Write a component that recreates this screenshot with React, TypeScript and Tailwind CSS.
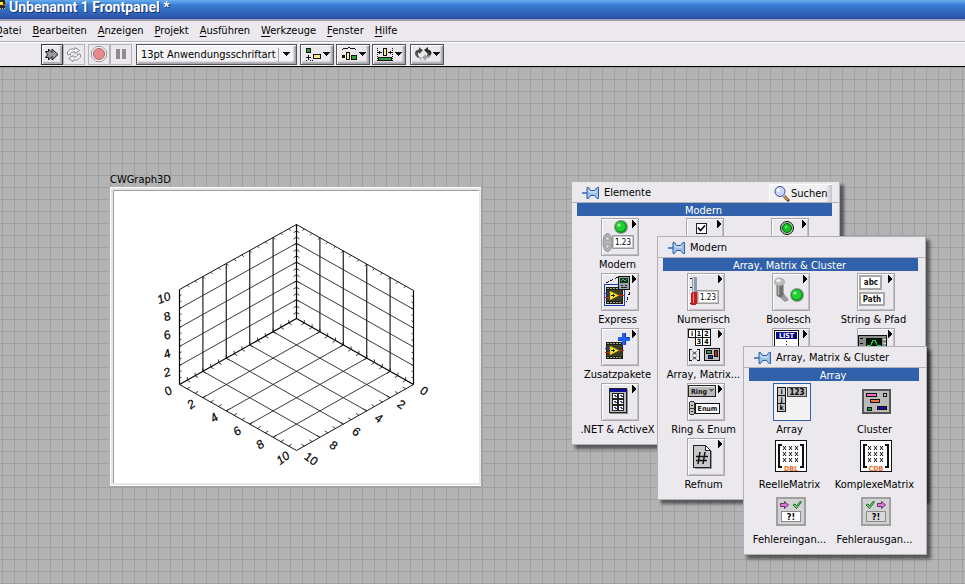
import type { ReactNode } from "react";

const INK = "#111";

function Arrow() {
  return <path d="M31 2h1v1h1v1h1v1h1v2h-1v1h-1v1h-1v1h-1z" fill="#000" />;
}

function Led({ cx, cy, r = 6 }: { cx: number; cy: number; r?: number }) {
  return (
    <g shapeRendering="auto">
      <circle cx={cx} cy={cy} r={r + 1} fill="#9a9a9a" />
      <circle cx={cx} cy={cy} r={r} fill="#0b9a1c" />
      <circle cx={cx - 0.5} cy={cy - 0.5} r={r - 1.2} fill="#22d02f" />
      <circle cx={cx - 2} cy={cy - 2} r={1.6} fill="#a6f7a4" />
    </g>
  );
}

function Num({ x, y }: { x: number; y: number }) {
  return (
    <g>
      <rect x={x} y={y} width="22" height="14" fill="#9c9c9c" />
      <rect x={x + 1} y={y + 1} width="20" height="12" fill="#c9c9c9" />
      <rect x={x + 2} y={y + 2} width="18" height="10" fill="#fff" />
      <text x={x + 11} y={y + 10} textAnchor="middle" fontSize="8" fill="#000">1.23</text>
    </g>
  );
}

function Chip({ x, y }: { x: number; y: number }) {
  return (
    <g>
      <rect x={x} y={y} width="17" height="17" fill="#1d1d14" />
      <path d={`M${x + 1} ${y + 1.5}h15M${x + 1} ${y + 15.5}h15`} stroke="#a9a98c" strokeDasharray="2 1" />
      <rect x={x + 1} y={y + 3} width="15" height="11" fill="#3c3d22" />
      <path d={`M${x - 1} ${y + 6.5}h6`} stroke="#1c3fd0" strokeWidth="1" />
      <path d={`M${x - 1} ${y + 10.5}h6M${x + 12} ${y + 8.5}h6`} stroke="#d02020" strokeWidth="1" />
      <g shapeRendering="auto">
        <path d={`M${x + 4} ${y + 4}l9 4.500l-9 4.500z`} fill="#f5ee2c" stroke="#a08a00" strokeWidth=".5" />
      </g>
      <path d={`M${x + 5} ${y + 8.5}h4M${x + 7.5} ${y + 7}v3`} stroke="#222" />
    </g>
  );
}

function ModernIcon() {
  return (
    <>
      <g shapeRendering="auto">
        <ellipse cx="6.500" cy="24.500" rx="4.500" ry="9" fill="#b4b4b4" stroke="#8c8c8c" />
        <path d="M4 22l2.500-3.500l2.500 3.500zM4 27l2.500 3.500l2.500-3.500z" fill="#eee" stroke="#808080" strokeWidth=".6" />
      </g>
      <Led cx={20} cy={9} />
      <Num x={11} y={17} />
      <Arrow />
    </>
  );
}

function CheckIcon() {
  return (
    <>
      <rect x="10.500" y="5.500" width="10" height="10" fill="#fff" stroke="#222" />
      <path d="M12 9.500l2.500 3l4.500-5" fill="none" stroke="#000" strokeWidth="1.500" shapeRendering="auto" />
      <Arrow />
    </>
  );
}

function RoundLedIcon() {
  return (
    <>
      <g shapeRendering="auto">
        <circle cx="16" cy="10" r="6.500" fill="#b9c9b9" stroke="#111" />
        <circle cx="16" cy="10" r="4.500" fill="#12c320" stroke="#0b5a12" />
        <circle cx="15" cy="9" r="1.500" fill="#5fe767" />
      </g>
      <Arrow />
    </>
  );
}

function ExpressIcon() {
  return (
    <>
      <path d="M5 10l12-6M29 19l-4 10" fill="none" stroke="#111" strokeDasharray="3 2" />
      <rect x="3.500" y="11.500" width="20" height="21" fill="#e9ebf5" stroke="#1c3fae" />
      <Chip x={5} y={14} />
      <rect x="17.500" y="3.500" width="11" height="13" fill="#9da3ab" stroke="#111" />
      <rect x="19" y="5" width="8" height="5" fill="#10351a" />
      <path d="M20 8l2-2l2 2l2-2" fill="none" stroke="#4be36a" strokeWidth=".8" />
      <path d="M20 12.500h2M24 12.500h2M20 14.500h6" stroke="#222" />
      <Arrow />
    </>
  );
}

function AddonIcon() {
  return (
    <>
      <Chip x={5} y={14} />
      <path d="M21 5h4v4h4v4h-4v4h-4v-4h-4V9h4z" fill="#1d62f0" />
      <path d="M24.500 5v4M25 9.500h3M24.500 13v4M17 12.500h4" fill="none" stroke="#0c2f9c" />
      <Arrow />
    </>
  );
}

function NetIcon() {
  return (
    <>
      <rect x="9" y="6" width="18" height="25" fill="#8d8d8d" />
      <rect x="8.500" y="5.500" width="17" height="24" fill="#bdbdbd" stroke="#222" />
      <rect x="9" y="6" width="16" height="3" fill="#0d0d99" />
      {[11, 17].flatMap((x) =>
        [10, 16, 22].map((y) => (
          <g key={`${x}-${y}`}>
            <rect x={x + 0.5} y={y + 0.5} width="5" height="5" fill="#fff" stroke="#222" />
            <path d={`M${x + 2} ${y + 2.5}h2M${x + 3} ${y + 3.5}h2`} stroke="#2b3f8c" />
          </g>
        )),
      )}
      <Arrow />
    </>
  );
}

function NumericIcon() {
  return (
    <>
      <path d="M3 5.500h2M3 14.500h2M3 30.500h2" stroke="#111" />
      <rect x="5" y="4" width="5" height="17" rx="2" fill="#8f9bab" />
      <path d="M6.500 5v15" stroke="#d8e2ef" />
      <rect x="4" y="19" width="6" height="13" rx="2" fill="#c21f1f" />
      <path d="M6.500 20v10" stroke="#ff7a70" />
      <Num x={10} y={17} />
      <Arrow />
    </>
  );
}

function BoolIcon() {
  return (
    <>
      <g shapeRendering="auto">
        <path d="M9 17l8 10l-4 2l-6-5z" fill="#9b9b9b" />
        <rect x="4.500" y="9" width="7" height="15" rx="3" fill="#6f6f6f" />
        <path d="M6.500 11v11" stroke="#b5b5b5" strokeWidth="1.500" />
        <ellipse cx="7.500" cy="9" rx="5" ry="4" fill="#bdbdbd" stroke="#8a8a8a" strokeWidth=".6" />
        <ellipse cx="6.500" cy="7.500" rx="2.500" ry="1.500" fill="#efefef" />
      </g>
      <Led cx={25} cy={22} />
      <Arrow />
    </>
  );
}

function StringIcon() {
  return (
    <>
      <rect x="3" y="3" width="21" height="13" fill="#fff" stroke="#a8a8a8" strokeWidth="2" />
      <text x="14" y="12" textAnchor="middle" fontSize="8" fontWeight="600" fill={INK}>abc</text>
      <rect x="3" y="20" width="24" height="12" fill="#fff" stroke="#a8a8a8" strokeWidth="2" />
      <text x="15" y="29" textAnchor="middle" fontSize="8" fontWeight="600" fill={INK}>Path</text>
      <Arrow />
    </>
  );
}

function ArrayMatrixIcon() {
  return (
    <>
      <path d="M1.500 1.500h22v8h-22zM8.500 1.500v8M15.500 1.500v8" fill="#fff" stroke="#111" />
      <path d="M8.500 9.500h15v8h-15zM15.500 9.500v8" fill="#fff" stroke="#111" />
      <g fontSize="7" fontWeight="700" textAnchor="middle" fill="#000">
        <text x="5" y="8">i</text>
        <text x="12" y="8">1</text>
        <text x="19.500" y="8">2</text>
        <text x="12" y="16">3</text>
        <text x="19.500" y="16">4</text>
      </g>
      <path d="M5 21.500H2.500v11H5M10 21.500h2.500v11H10" fill="none" stroke="#111" />
      <path d="M5.500 23.500l4 3m0-3l-4 3M5.500 28.500l4 3m0-3l-4 3" stroke="#111" strokeWidth=".8" shapeRendering="auto" />
      <rect x="17.500" y="20.500" width="15" height="12" fill="#bdbdbd" stroke="#111" />
      <g stroke="#111" strokeWidth="1">
        <rect x="19.500" y="22.500" width="5" height="3" fill="#22a33a" />
        <rect x="27.500" y="22.500" width="3" height="6" fill="#c22" />
        <rect x="21.500" y="27.500" width="4" height="3" fill="#1d3fc0" />
      </g>
      <Arrow />
    </>
  );
}

function ListIcon() {
  return (
    <>
      <rect x="2.500" y="2.500" width="24" height="33" fill="#fff" stroke="#111" />
      <rect x="4" y="4" width="21" height="7" fill="#0b0b86" />
      <text x="14.500" y="10" textAnchor="middle" fontSize="7" fontWeight="700" fill="#fff">LIST</text>
      <path d="M14.500 13v10" stroke="#111" strokeDasharray="1 2" />
      <Arrow />
    </>
  );
}

function GraphIcon() {
  return (
    <>
      <rect x="1.500" y="7.500" width="28" height="24" fill="#8b8f8b" stroke="#111" />
      <path d="M3 10.500h3M3 15.500h3" stroke="#111" />
      <rect x="9" y="10" width="16" height="18" fill="#04140a" />
      <path d="M10 18l4-1l2-5h2l2 5l4 1" fill="none" stroke="#2ad24a" />
      <path d="M26 11.500h3M26 15.500h3" stroke="#ddd" />
      <Arrow />
    </>
  );
}

function RingIcon() {
  return (
    <>
      <rect x="1.500" y="2.500" width="27" height="11" fill="#b9b9b9" stroke="#222" />
      <path d="M2 3.500h26" stroke="#eee" />
      <text x="4" y="11" fontSize="7" fontWeight="700" fill={INK}>Ring</text>
      <path d="M22 6h5l-2.500 3z" fill="#666" />
      <rect x="2.500" y="18.500" width="5" height="13" rx="2" fill="#c4c4c4" stroke="#333" />
      <path d="M4 22.500h2M4 28.500h2M3 25.500h4" stroke="#333" />
      <rect x="8.500" y="20.500" width="24" height="10" fill="#fff" stroke="#111" />
      <text x="20.500" y="28" textAnchor="middle" fontSize="7" fontWeight="700" fill={INK}>Enum</text>
      <Arrow />
    </>
  );
}

function RefnumIcon() {
  return (
    <>
      <path d="M8 30.500h16.500V13" fill="none" stroke="#999" />
      <path d="M6.500 7.500h12l5 5v17h-17z" fill="#c9c9c9" stroke="#222" />
      <path d="M18.500 7.500v5h5z" fill="#fff" stroke="#222" />
      <path d="M13 14l-2 12M18 14l-2 12M9 18.500h12M9 22.500h11" stroke="#111" strokeWidth="1.500" shapeRendering="auto" />
      <Arrow />
    </>
  );
}

function ArrayIcon() {
  return (
    <>
      <path d="M4.500 4.500h8v24h-8zM4.500 12.500h8M4.500 20.500h8" fill="#c8c8c8" stroke="#111" />
      <rect x="14.500" y="4.500" width="19" height="9" fill="#b8b8b8" stroke="#444" />
      <g fontSize="7" fontWeight="700" textAnchor="middle" fill="#000">
        <text x="8.500" y="11">i</text>
        <text x="8.500" y="19">j</text>
        <text x="8.500" y="27">k</text>
        <text x="24" y="12" fontSize="8">123</text>
      </g>
    </>
  );
}

function ClusterIcon() {
  return (
    <>
      <rect x="5" y="7" width="27" height="23" fill="#bbb" stroke="#555" strokeWidth="2" />
      <rect x="8.500" y="10.500" width="10" height="3" fill="#f070c0" stroke="#111" />
      <rect x="25.500" y="10.500" width="3" height="3" fill="#ccc" stroke="#111" />
      <rect x="12.500" y="16.500" width="9" height="3" fill="#f0703c" stroke="#111" />
      <rect x="9.500" y="24.500" width="4" height="3" fill="#17a030" stroke="#111" />
      <rect x="19.500" y="23.500" width="9" height="3" fill="#0d0da0" stroke="#111" />
    </>
  );
}

function MatrixIcon({ kind }: { kind: string }) {
  return (
    <>
      <rect x="2.500" y="2.500" width="31" height="31" fill="#fff" stroke="#111" />
      <path d="M9 7H6v22h3M27 7h3v22h-3" fill="none" stroke="#111" strokeWidth="1.500" />
      <g stroke="#111" strokeWidth="1" shapeRendering="auto">
        {[10, 16, 22].flatMap((x) =>
          [8, 14, 20].map((y) => <path key={`${x}-${y}`} d={`M${x} ${y}l3 4m0-4l-3 4`} />),
        )}
      </g>
      <text x="18" y="33" textAnchor="middle" fontSize="7" fontWeight="700" fill="#e8702a">{kind}</text>
    </>
  );
}

function ErrorIcon({ out = false }: { out?: boolean }) {
  const arrowX = out ? 20 : 8;
  const checkX = out ? 8 : 20;
  return (
    <>
      <rect x="4" y="5" width="28" height="27" fill="#d2d2d2" stroke="#a0a0a0" strokeWidth="2" />
      <path
        d={`M${arrowX - 0.5} 10.500h4v-2l4 3.500l-4 3.500v-2h-4z`}
        fill="#d97ad6"
        stroke="#4c1450"
        strokeWidth=".8"
        shapeRendering="auto"
      />
      <path
        d={`M${checkX} 12l2 -1l1.500 2l4-5l1 1l-5 6.500z`}
        fill="#6bdc6f"
        stroke="#0d4f18"
        strokeWidth=".8"
        shapeRendering="auto"
      />
      <rect x="8.500" y="18.500" width="19" height="10" fill={out ? "#d8d8d8" : "#fff"} stroke="#8b8b8b" />
      <text x="18" y="27" textAnchor="middle" fontSize="9" fontWeight="700" fill="#000">?!</text>
    </>
  );
}

function Pin() {
  return (
    <svg width="17" height="14" viewBox="0 0 17 14" aria-hidden="true">
      <path d="M0 7h5" stroke="#2d66ad" strokeWidth="1.500" />
      <path
        d="M5 1.500h1.500l2 3h4l2.500-3h1.500v11H15l-2.500-3h-4l-2 3H5z"
        fill="#9cc0ea"
        stroke="#2a5ba3"
      />
      <path d="M6 4l2 2h6" stroke="#e4f1ff" fill="none" />
    </svg>
  );
}

type Item = { label: string; icon: ReactNode; selected?: boolean; plain?: boolean };

function PaletteItem({ label, icon, selected, plain }: Item) {
  const frame = selected
    ? "border-[#3261ab] bg-[#f3f2f5]"
    : plain
      ? "border-transparent"
      : "border-[#a8a6ab] bg-[#ebe9ed] shadow-[inset_1px_1px_0_#fff,inset_-1px_-1px_0_#c3c1c6]";
  return (
    <button type="button" className="flex h-[55px] min-w-0 flex-col items-center">
      <span className={`block size-[38px] shrink-0 border ${frame}`}>
        <svg width="36" height="36" viewBox="1 1 36 36" shapeRendering="crispEdges" aria-hidden="true">
          {icon}
        </svg>
      </span>
      <span className="pr-1 text-[11px] leading-[17px] whitespace-nowrap">{label}</span>
    </button>
  );
}

function Palette({
  title,
  category,
  items,
  columns,
  place,
  search,
}: {
  title: string;
  category: string;
  items: Item[];
  columns: string;
  place: string;
  search?: boolean;
}) {
  return (
    <section
      className={`absolute border border-[#b3b1b6] bg-[#ebe9ed] shadow-[4px_4px_3px_rgba(0,0,0,0.5)] ${place}`}
    >
      <header className="flex h-[21px] items-center gap-[5px] border-b border-[#b3b1b6] pt-[2px] pr-[7px] pl-[10px]">
        <Pin />
        <h2 className="flex-1 text-[11px] leading-4">{title}</h2>
        {search && (
          <button
            type="button"
            className="flex h-[18px] w-[63px] items-center gap-px border-t border-l border-white bg-linear-to-r from-[#f1f0f3] from-90% to-[#c4c2c8] pl-1 text-[11px] leading-4"
          >
            <svg width="16" height="17" viewBox="0 0 16 17" aria-hidden="true">
              <path d="M10 11l5 5" stroke="#5a3a1c" strokeWidth="3" />
              <path d="M10 11l4 4" stroke="#e3a85c" strokeWidth="1.500" />
              <circle cx="6" cy="6.500" r="5" fill="#c9d6fb" stroke="#3b4a9a" />
              <circle cx="4.500" cy="5" r="1.800" fill="#fff" />
            </svg>
            <span>Suchen</span>
          </button>
        )}
      </header>
      <div className="pr-[7px] pb-[6px] pl-[5px]">
        <h3 className="h-[13px] bg-[#3261ab] pr-[2px] text-center text-[11px] leading-[15px] text-white">{category}</h3>
        <div className={`mt-[2px] grid ${columns}`}>
          {items.map((item, i) => (
            <PaletteItem key={i} {...item} />
          ))}
        </div>
      </div>
    </section>
  );
}

type Pt = [number, number];
const lerp = (a: Pt, b: Pt, t: number): Pt => [a[0] + (b[0] - a[0]) * t, a[1] + (b[1] - a[1]) * t];

const TOP: Pt = [186.5, 37.5];
const MID: Pt = [186.5, 131.5];
const BOTTOM: Pt = [186.5, 263.5];
const LT: Pt = [69.5, 102.5];
const LB: Pt = [69.5, 197.5];
const RT: Pt = [303.5, 103.5];
const RB: Pt = [303.5, 197.5];

const seg = (a: Pt, b: Pt) => `M${a[0]} ${a[1]}L${b[0]} ${b[1]}`;
const STEPS = [0.2, 0.4, 0.6, 0.8];
const TICKS = Array.from({ length: 14 }, (_, i) => (i + 1) / 15);

const gridLines = (a: Pt, b: Pt, c: Pt, d: Pt) => STEPS.map((t) => seg(lerp(a, b, t), lerp(c, d, t))).join("");
const tickLines = (a: Pt, b: Pt, dx: number, dy: number) =>
  TICKS.map((t) => {
    const p = lerp(a, b, t);
    return `M${p[0]} ${p[1]}l${dx} ${dy}`;
  }).join("");

function Graph3D() {
  const vertical = gridLines(TOP, LT, MID, LB) + gridLines(TOP, RT, MID, RB);
  const thin =
    gridLines(LT, LB, TOP, MID) +
    gridLines(TOP, MID, RT, RB) +
    gridLines(LB, BOTTOM, MID, RB) +
    gridLines(MID, LB, RB, BOTTOM);
  const frame = seg(LT, TOP) + seg(TOP, RT) + seg(LB, BOTTOM) + seg(BOTTOM, RB);
  const strong = seg(TOP, MID) + seg(LT, LB) + seg(RT, RB) + seg(LB, MID) + seg(MID, RB);
  const ticks =
    tickLines(TOP, MID, -3, 2) +
    tickLines(TOP, MID, 3, 2) +
    tickLines(LT, TOP, 2, 2) +
    tickLines(TOP, RT, -2, 2) +
    tickLines(LB, BOTTOM, 3, -2) +
    tickLines(BOTTOM, RB, -3, -2) +
    tickLines(LB, MID, 3, 2) +
    tickLines(LB, MID, 0, -3) +
    tickLines(MID, RB, -3, 2) +
    tickLines(MID, RB, 0, -3) +
    tickLines(LT, LB, 2, -1) +
    tickLines(RT, RB, -2, -1);
  const left = ["0", "2", "4", "6", "8", "10"].map((v, i) => ({ v, x: 58 + i * 23, y: 204 + i * 13.4 }));
  const right = ["0", "2", "4", "6", "8", "10"].map((v, i) => ({ v, x: 314 - i * 22.6, y: 204 + i * 13.6 }));
  const z = ["10", "8", "6", "4", "2"].map((v, i) => ({ v, x: v === "10" ? 54 : 57, y: 111 + i * 18.6 }));
  return (
    <svg width="371" height="299" viewBox="0 0 371 299" role="img" aria-label="CWGraph3D" className="block">
      <rect width="371" height="299" fill="#fff" />
      <path d="M2 297V2h368v295z" fill="#fff" stroke="#e6e5e9" strokeWidth="2" />
      <path d="M3.500 296V3.500H369" fill="none" stroke="#9d9ca3" />
      <path d={vertical} fill="none" stroke="#333" strokeWidth="1.300" />
      <path d={thin} fill="none" stroke="#222" strokeWidth=".9" />
      <path d={frame} fill="none" stroke="#111" strokeWidth="1" />
      <path d={strong} fill="none" stroke="#000" strokeWidth="1.200" />
      <path d={ticks} fill="none" stroke="#111" strokeWidth=".8" />
      <g fontSize="12" textAnchor="middle" className="font-['Liberation_Sans',Arial,sans-serif]" fill="#000" stroke="#000" strokeWidth=".2">
        {left.map((l) => (
          <text key={l.v} fontStyle="italic" transform={`translate(${l.x} ${l.y}) rotate(-36)`} y="4">{l.v}</text>
        ))}
        {right.map((l) => (
          <text key={l.v} transform={`translate(${l.x} ${l.y}) rotate(36)`} y="4">{l.v}</text>
        ))}
        {z.map((l) => (
          <text key={l.v} fontStyle="italic" transform={`translate(${l.x} ${l.y}) rotate(-20)`} y="4">{l.v}</text>
        ))}
      </g>
    </svg>
  );
}

function Caret() {
  return (
    <svg width="7" height="5" viewBox="0 0 7 5" aria-hidden="true" shapeRendering="crispEdges">
      <path d="M0 0h7v1H6v1H5v1H4v1H3V3H2V2H1V1H0z" fill="#111" />
    </svg>
  );
}

function ToolButton({ label, disabled, children }: { label: string; disabled?: boolean; children: ReactNode }) {
  const look = disabled
    ? "border-[#b5b3b8] bg-[#ebe9ed]"
    : "border-[#3c3c3c] bg-[#ebe9ed] shadow-[inset_1px_1px_0_#fff,inset_-2px_-2px_1px_#b0aeb4]";
  return (
    <button type="button" aria-label={label} className={`flex h-[21px] w-[22px] items-center justify-center border ${look}`}>
      {children}
    </button>
  );
}

function DropButton({ label, children }: { label: string; children: ReactNode }) {
  return (
    <button
      type="button"
      aria-label={label}
      className="flex h-[21px] w-[34px] items-center justify-center gap-px border border-[#55545a] bg-[#ebe9ed] shadow-[inset_1px_1px_0_#fff,inset_-2px_-2px_2px_#a4a2a8]"
    >
      <svg width="18" height="17" viewBox="0 0 18 17" shapeRendering="crispEdges" aria-hidden="true">
        {children}
      </svg>
      <Caret />
    </button>
  );
}

const MENU = ["Datei", "Bearbeiten", "Anzeigen", "Projekt", "Ausführen", "Werkzeuge", "Fenster", "Hilfe"];

export default function App() {
  return (
    <div className="flex min-h-screen flex-col overflow-hidden bg-[#ebe9ed] font-['DejaVu_Sans_Condensed','DejaVu_Sans',sans-serif] text-[11px] text-black">
      <header className="flex h-[21px] items-start border-b-2 border-[#9c9fb4] bg-linear-to-b from-[#6aaeee] via-[#3a7fd6] via-25% to-[#2a50a6]">
        <svg width="9" height="12" viewBox="0 0 9 12" shapeRendering="crispEdges" aria-hidden="true">
          <path d="M0 0h5v9H0z" fill="#26271a" />
          <path d="M0 2h3v3H0z" fill="#f0e62e" />
          <path d="M3 4h2v2H3z" fill="#d22" />
          <path d="M0 8.500h5" stroke="#b9b9a0" strokeDasharray="1 1" />
        </svg>
        <h1 className="text-[14px] leading-[14px] font-bold text-white [text-shadow:1px_1px_0_#17346f] font-['Roboto',sans-serif]">
          Unbenannt 1 Frontpanel *
        </h1>
      </header>

      <nav className="-ml-[5px] flex h-[21px] items-center gap-[11px] border-b border-[#b0aeb4]">
        {MENU.map((m) => (
          <button key={m} type="button" className="leading-4">
            <span className="underline underline-offset-2">{m[0]}</span>
            {m.slice(1)}
          </button>
        ))}
      </nav>

      <div className="flex h-[25px] items-center border-t border-b border-t-white border-b-black pl-[41px]">
        <ToolButton label="Ausführen">
          <svg width="16" height="15" viewBox="0 0 16 15" aria-hidden="true">
            <path d="M1.500 4.500h3V2l3.500 3.500V2l6 5.500l-6 5.500V9.500L4.500 13v-2.500h-3l2-3z" fill="#9a9a9a" stroke="#111" />
          </svg>
        </ToolButton>
        <ToolButton label="Wiederholt ausführen" disabled>
          <svg width="16" height="15" viewBox="0 0 16 15" fill="#f4f3f6" stroke="#8f8d93" strokeWidth="1" aria-hidden="true">
            <path d="M1.500 7.500V5l3-3H9V.5l4.500 3L9 6.500V5H6L4.500 6.500V8z" />
            <path d="M14.500 7.500V10l-3 3H7v1.500l-4.500-3L7 8.500V10h3l1.500-1.500V7z" />
          </svg>
        </ToolButton>
        <div className="w-[3px]" />
        <ToolButton label="Abbrechen" disabled>
          <svg width="16" height="17" viewBox="0 0 16 17" aria-hidden="true">
            <path d="M5 .5h6L15.500 5v6L11 15.500H5L.5 11V5z" fill="#eee" stroke="#9c9a9f" />
            <circle cx="8" cy="8" r="5.500" fill="#e88a8c" stroke="#a06c6e" />
          </svg>
        </ToolButton>
        <ToolButton label="Pause" disabled>
          <svg width="10" height="11" viewBox="0 0 10 11" fill="#8e8c92" aria-hidden="true">
            <path d="M0 0h4v10H0zM6 0h4v10H6z" />
          </svg>
        </ToolButton>
        <div className="ml-1 flex h-[21px] w-[161px] items-center border border-[#55545a] bg-[#f4f3f6] pr-[6px] shadow-[inset_1px_1px_0_#fff,inset_-2px_-2px_2px_#a4a2a8]">
          <select
            aria-label="Schriftart"
            className="min-w-0 flex-1 appearance-none bg-transparent pl-1 text-[11px] leading-4 outline-none"
          >
            <option>13pt Anwendungsschriftart</option>
          </select>
          <span className="mr-1 h-[14px] w-px bg-[#a5a3a9]" />
          <Caret />
        </div>
        <div className="ml-[3px] flex gap-[2px]">
          <DropButton label="Objekte ausrichten">
            <rect x="2.500" y="2.500" width="4" height="4" fill="#2f9e3c" stroke="#111" />
            <path d="M2 11.500h5M4.500 9v5M2 14.500h1M6 14.500h1M8 14.500h1" stroke="#111" />
            <rect x="9.500" y="8.500" width="7" height="4" fill="#f6ee86" stroke="#111" />
          </DropButton>
          <DropButton label="Objekte einteilen">
            <path d="M2 3.500h1M3 2.500h5M8 1.500h2M10 2.500h5M15 3.500h1" fill="none" stroke="#111" />
            <path d="M2 9h3v3H2z" fill="#111" />
            <rect x="6.500" y="6.500" width="3" height="7" fill="#f6ee86" stroke="#111" />
            <rect x="11.500" y="9.500" width="5" height="4" fill="#2f9e3c" stroke="#111" />
          </DropButton>
          <DropButton label="Größe ändern">
            <path d="M1.500 2v13M16.500 2v13" stroke="#111" strokeDasharray="1 1" />
            <path d="M2 6.500h4M3.500 5v3M12 6.500h4M14.500 5v3" stroke="#111" />
            <rect x="7.500" y="2.500" width="3" height="7" fill="#f6ee86" stroke="#111" />
            <rect x="2.500" y="11.500" width="13" height="3" fill="#2f9e3c" stroke="#111" />
          </DropButton>
        </div>
        <div className="ml-1 flex">
          <DropButton label="Neu anordnen">
            <g shapeRendering="auto">
              <path d="M6 12H4Q1 10 1 7.500Q1 4 5 3.500V1l4 3.500L5 8V6.500Q3 7 4 9z" fill="#4a4a4a" />
              <path d="M10 4l4-3v2.500Q17.500 4 17.500 7.500Q17 11 13 11.500V9q2-1 1-2.500V8z" fill="#2c2c2c" />
              <path d="M17 8q0 4-5 4.500V15l-4-3.500L12 8v2q3 0 5-2z" fill="#a0a0a0" />
              <path d="M1 8q1 4 6 4v2.500" fill="none" stroke="#999" />
            </g>
          </DropButton>
        </div>
      </div>

      <main className="relative flex-1 bg-[#b3b3b3] bg-[linear-gradient(to_right,#a0a0a0_1px,transparent_1px),linear-gradient(to_bottom,#a0a0a0_1px,transparent_1px)] bg-size-[12px_12px] bg-position-[2px_0]">
        <figure className="absolute top-[104px] left-[110px]">
          <figcaption className="h-4 leading-[18px]">CWGraph3D</figcaption>
          <div className="shadow-[2px_2px_0_#a2a2a2]">
            <Graph3D />
          </div>
        </figure>

        <Palette
          title="Elemente"
          category="Modern"
          search
          columns="grid-cols-[repeat(3,85px)]"
          place="left-[571px] top-[114px]"
          items={[
            { label: "Modern", icon: <ModernIcon /> },
            { label: "", icon: <CheckIcon /> },
            { label: "", icon: <RoundLedIcon /> },
            { label: "Express", icon: <ExpressIcon /> },
            { label: "", icon: null },
            { label: "", icon: null },
            { label: "Zusatzpakete", icon: <AddonIcon /> },
            { label: "", icon: null },
            { label: "", icon: null },
            { label: ".NET & ActiveX", icon: <NetIcon /> },
          ]}
        />
        <Palette
          title="Modern"
          category="Array, Matrix & Cluster"
          columns="grid-cols-[repeat(3,85px)]"
          place="left-[657px] top-[169px]"
          items={[
            { label: "Numerisch", icon: <NumericIcon /> },
            { label: "Boolesch", icon: <BoolIcon /> },
            { label: "String & Pfad", icon: <StringIcon /> },
            { label: "Array, Matrix...", icon: <ArrayMatrixIcon /> },
            { label: "", icon: <ListIcon /> },
            { label: "", icon: <GraphIcon /> },
            { label: "Ring & Enum", icon: <RingIcon /> },
            { label: "", icon: null },
            { label: "", icon: null },
            { label: "Refnum", icon: <RefnumIcon /> },
          ]}
        />
        <Palette
          title="Array, Matrix & Cluster"
          category="Array"
          columns="grid-cols-[repeat(2,85px)]"
          place="left-[743px] top-[279px]"
          items={[
            { label: "Array", icon: <ArrayIcon />, selected: true },
            { label: "Cluster", icon: <ClusterIcon />, plain: true },
            { label: "ReelleMatrix", icon: <MatrixIcon kind="DBL" />, plain: true },
            { label: "KomplexeMatrix", icon: <MatrixIcon kind="CDB" />, plain: true },
            { label: "Fehlereingan...", icon: <ErrorIcon />, plain: true },
            { label: "Fehlerausgan...", icon: <ErrorIcon out />, plain: true },
          ]}
        />
      </main>
    </div>
  );
}
